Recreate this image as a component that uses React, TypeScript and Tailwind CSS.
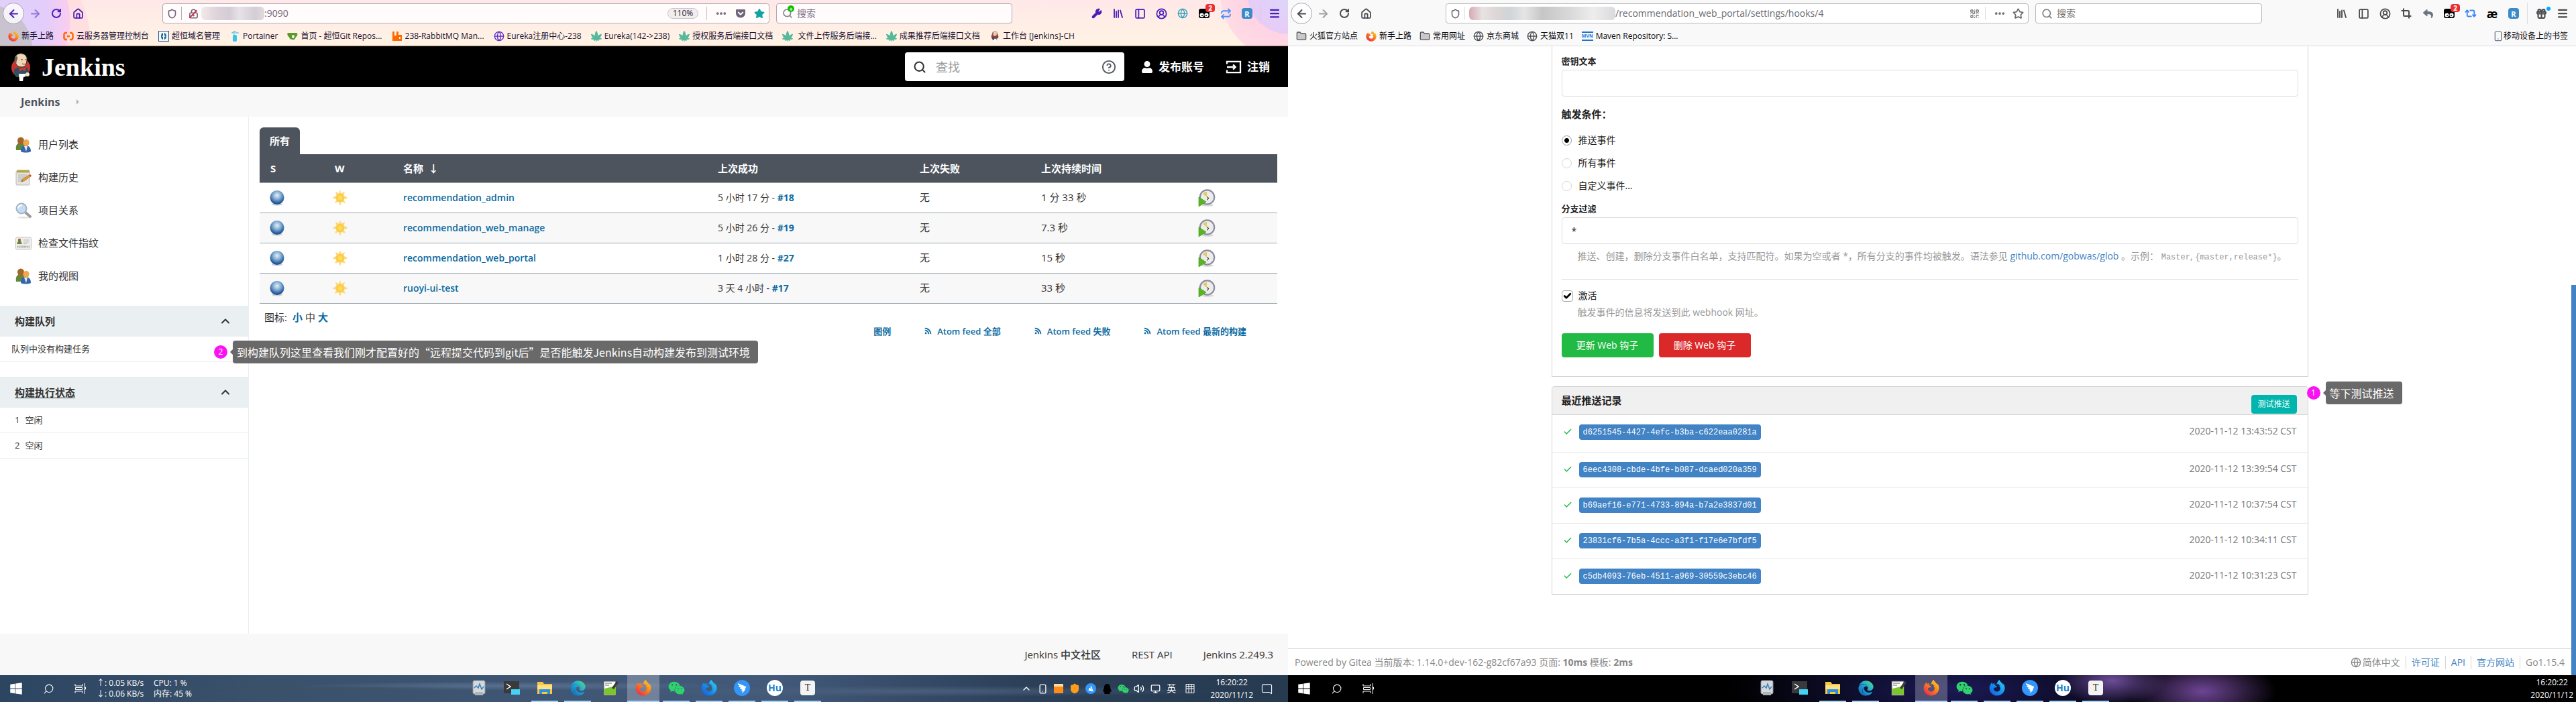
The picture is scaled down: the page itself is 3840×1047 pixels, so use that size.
import React from "react";
import {
  ArrowLeft, ArrowRight, RotateCw, House, Shield, LockKeyhole, Wrench, Library, PanelLeft, CircleUserRound,
  Menu, Star, Ellipsis, Search, Crop, Gift, QrCode, Repeat, Folder, Globe, Smartphone, ChevronUp, Check,
  CircleHelp, Volume2, MessageSquare, Monitor, Repeat2,
} from "lucide-react";
import {
  FaWindows, FaFirefoxBrowser, FaGetPocket, FaCannabis, FaRss, FaEdge, FaWeixin, FaQq, FaReply, FaUser, FaStar, FaTelegramPlane,
} from "react-icons/fa";

const FONT = "font-['Open_Sans','Noto_Sans_CJK_SC',sans-serif]";

/* ---------- small drawings ---------- */

function Defs() {
  return (
    <svg width="0" height="0" className="absolute" aria-hidden="true">
      <defs>
        <linearGradient id="fox" x1="1" y1="0" x2="0.2" y2="1">
          <stop offset="0" stopColor="#ffe13b" />
          <stop offset="0.45" stopColor="#ff8a16" />
          <stop offset="1" stopColor="#f0264d" />
        </linearGradient>
        <linearGradient id="foxBlue" x1="1" y1="0" x2="0" y2="1">
          <stop offset="0" stopColor="#2fe3f5" />
          <stop offset="0.5" stopColor="#1592f0" />
          <stop offset="1" stopColor="#1557d8" />
        </linearGradient>
        <linearGradient id="edge" x1="1" y1="0" x2="0" y2="1">
          <stop offset="0" stopColor="#5be07a" />
          <stop offset="0.45" stopColor="#1ea9d8" />
          <stop offset="1" stopColor="#0f5fb4" />
        </linearGradient>
        <radialGradient id="ball" cx="0.5" cy="0.35" r="0.65">
          <stop offset="0" stopColor="#e6f0f3" />
          <stop offset="0.4" stopColor="#8db4d8" />
          <stop offset="0.8" stopColor="#2d64a6" />
          <stop offset="1" stopColor="#1d4580" />
        </radialGradient>
        <radialGradient id="sun">
          <stop offset="0" stopColor="#ffe676" />
          <stop offset="1" stopColor="#fbc533" />
        </radialGradient>
      </defs>
    </svg>
  );
}

function Butler({ className }: { className: string }) {
  return (
    <svg viewBox="0 0 30 42" className={className} aria-hidden="true">
      <ellipse cx="15" cy="22" rx="14" ry="14" fill="#c9352d" />
      <path d="M6 8C7 2 13 0 17 1c6 1 8 6 7 11-1 6-3 9-8 9C9 21 6 15 6 8z" fill="#f0d6b7" stroke="#33281f" />
      <path d="M6 8c-1 3 0 7 2 9l1-6c2-2 1-4 0-7z" fill="#6b6256" />
      <path d="M15 10h3m3 0h3M17 16c2 1 4 1 5 0" stroke="#4b382a" strokeWidth="1" fill="none" />
      <path d="M5 25c4-4 7-4 10-3l8-1c3 2 4 6 4 9l-5 6H8c-2-3-4-7-3-11z" fill="#335061" />
      <path d="M13 22l4 1 5-2v6l-5-2-4 3z" fill="#d33833" />
      <path d="M12 31h10v4l-3 1-1 6h-5z" fill="#fff" />
      <circle cx="25" cy="32" r="3" fill="#f3dfc7" />
    </svg>
  );
}

function People() {
  return (
    <svg viewBox="0 0 24 24" className="size-6" aria-hidden="true">
      <path d="M1 20c-1-7 1-11 7-11s7 4 7 11z" fill="#63873a" />
      <ellipse cx="8" cy="6" rx="5" ry="5.6" fill="#a5662a" />
      <path d="M8 22c0-6 2-9 7-9s8 3 8 9c-4 2-11 2-15 0z" fill="#3566ac" />
      <path d="M13 14h5l-2 8z" fill="#dfe9f5" />
      <ellipse cx="16" cy="9" rx="4.5" ry="5.3" fill="#efa84b" />
    </svg>
  );
}

function Notepad() {
  return (
    <svg viewBox="0 0 24 24" className="size-6" aria-hidden="true">
      <rect x="1" y="2" width="20" height="21" rx="1.500" fill="#e4e4e2" stroke="#b9b9b5" />
      <rect x="2" y="0.500" width="19" height="4" rx="1" fill="#b5a748" />
      <path d="M4 8h13M4 11h11M4 14h8M4 17h6" stroke="#a8a8a8" />
      <path d="M9 18l1.500-4L20 8l3 2-10 7z" fill="#e09b36" stroke="#8a6327" strokeWidth="0.500" />
      <path d="M20 8l2-1 2 2-1 1.500z" fill="#d8443c" />
      <path d="M9 18l1-2 1 1z" fill="#333" />
    </svg>
  );
}

function Loupe() {
  return (
    <svg viewBox="0 0 24 24" className="size-6" aria-hidden="true">
      <ellipse cx="13" cy="22.500" rx="10" ry="1.500" fill="#e3e3e3" />
      <path d="M14 14l8 7" stroke="#9c9c9c" strokeWidth="4" strokeLinecap="round" />
      <circle cx="9" cy="9" r="7.500" fill="#c3dcf8" stroke="#a9b3c0" strokeWidth="2" />
      <path d="M4 9a5 5 0 0 1 6-5" stroke="#fff" strokeWidth="2" fill="none" />
    </svg>
  );
}

function Card() {
  return (
    <svg viewBox="0 0 24 24" className="size-6" aria-hidden="true">
      <rect x="0.500" y="3" width="23" height="18" rx="1.500" fill="#eeeeec" stroke="#c4c4c0" />
      <circle cx="6" cy="7" r="2.200" fill="#a5662a" />
      <path d="M2.500 13c0-3 1-4.500 3.500-4.500S9.500 10 9.500 13z" fill="#63873a" />
      <path d="M12 7h9M12 10h8M12 12.500h5" stroke="#b8b8b4" />
      <path d="M3 17h18" stroke="#a4a4a0" strokeWidth="3" strokeDasharray="1 0.700" />
    </svg>
  );
}

function Ball() {
  return (
    <svg viewBox="0 0 24 24" className="size-6" role="img" aria-label="成功">
      <ellipse cx="12" cy="21.500" rx="8" ry="2" fill="#c9ced6" />
      <circle cx="12" cy="11.500" r="10.500" fill="url(#ball)" />
    </svg>
  );
}

function Sun() {
  return (
    <svg viewBox="0 0 24 24" className="size-6" role="img" aria-label="晴">
      <path
        d="M12 0l1.800 5.500L19 2.800l-1.500 5.600L23.500 12l-6 2.500L20 20l-5.800-2L12 24l-2.200-6L4 20l2.500-5.500L0.500 12l6-3.600L5 2.800l5.200 2.700z"
        fill="#fdd87a"
      />
      <circle cx="12" cy="12" r="6" fill="url(#sun)" />
    </svg>
  );
}

function BuildClock() {
  return (
    <svg viewBox="0 0 26 26" className="size-[26px]" aria-hidden="true">
      <ellipse cx="14" cy="24" rx="9" ry="1.800" fill="#d8d8d8" />
      <circle cx="13.500" cy="12" r="10.700" fill="#ecece8" stroke="#8c8ba3" strokeWidth="2.200" />
      <path d="M13 12V4a8 8 0 0 0-6 3z" fill="#e2ca64" />
      <path d="M13.500 11.500l2 2-2 3" stroke="#444" strokeWidth="1.300" fill="none" />
      <path d="M1 12l11 7-11 7z" fill="#55b81f" stroke="#3d8d14" strokeWidth="0.600" />
    </svg>
  );
}

function SignOut() {
  return (
    <svg viewBox="0 0 26 22" className="h-5 w-6" fill="none" stroke="currentColor" strokeWidth="2.500" aria-hidden="true">
      <path d="M2 6V2h22v18H2v-4M2 11h14M12 7l4 4-4 4" />
    </svg>
  );
}

function Monkey({ className }: { className: string }) {
  return (
    <svg viewBox="0 0 16 16" className={className} aria-hidden="true">
      <rect x="0" y="1" width="16" height="14" rx="3" fill="#000" />
      <circle cx="4.500" cy="10.500" r="3" fill="#fff" />
      <circle cx="11.500" cy="10.500" r="3" fill="#fff" />
      <circle cx="5" cy="11" r="1" fill="#000" />
      <circle cx="11" cy="11" r="1" fill="#000" />
    </svg>
  );
}

function TaskView() {
  return (
    <svg viewBox="0 0 18 18" className="size-[18px]" fill="none" stroke="#fff" aria-hidden="true">
      <path d="M1 2v3h11V2M1 16v-3h11v3M1.500 7.500h10v3h-10zM15.500 1v16M14.500 7h2v3h-2" />
    </svg>
  );
}

/* ---------- shared browser chrome ---------- */

type Tone = { icon: string };

function ToolButton({ label, children, className = "" }: { label: string; children: React.ReactNode; className?: string }) {
  return (
    <button type="button" aria-label={label} className={`relative flex h-8 w-8 flex-none items-center justify-center ${className}`}>
      {children}
    </button>
  );
}

function NavButtons({ tone }: { tone: Tone }) {
  return (
    <div className={`flex flex-none items-center pl-1 ${tone.icon}`}>
      <ToolButton label="后退" className="rounded-full border border-[#a9a3ad] bg-white/80"><ArrowLeft size={19} strokeWidth={2.5} /></ToolButton>
      <ToolButton label="前进" className="opacity-50"><ArrowRight size={19} strokeWidth={2.5} /></ToolButton>
      <ToolButton label="刷新"><RotateCw size={16} strokeWidth={3} /></ToolButton>
      <ToolButton label="主页"><House size={17} strokeWidth={2.5} /></ToolButton>
    </div>
  );
}

function Tampermonkey() {
  return (
    <ToolButton label="脚本">
      <Monkey className="size-4" />
      <span className="absolute top-0.5 right-0 flex h-3 w-3.5 items-center justify-center rounded-sm bg-[#eb2f2f] text-[10px] leading-none font-bold text-white">2</span>
    </ToolButton>
  );
}

function RBox() {
  return <span className="flex size-4 items-center justify-center rounded-sm bg-[#3b8bc9] text-[11px] leading-none font-bold text-white">R</span>;
}

type Mark = { icon: React.ReactNode; text: string };

function Bookmark({ icon, text }: Mark) {
  return (
    <a href="#" className="flex items-center gap-1 whitespace-pre">
      {icon}
      {text}
    </a>
  );
}

const firefoxIcon = <FaFirefoxBrowser className="size-4 flex-none fill-[url(#fox)]" />;
const leafIcon = <FaCannabis className="size-4 flex-none text-[#55b99b]" />;

const leftMarks: Mark[] = [
  { icon: firefoxIcon, text: "新手上路" },
  {
    icon: (
      <svg viewBox="0 0 16 16" className="size-4" fill="none" stroke="#ff6a00" strokeWidth="2.500" aria-hidden="true">
        <path d="M6 3H3L1.500 5v6L3 13h3M10 3h3l1.500 2v6L13 13h-3M6 8h4" />
      </svg>
    ),
    text: "云服务器管理控制台",
  },
  {
    icon: (
      <svg viewBox="0 0 16 16" className="size-4" aria-hidden="true">
        <rect x="0.500" y="0.500" width="15" height="15" fill="#f2f7fa" stroke="#2a5f92" />
        <path d="M7 3C3 4 3 12 7 13V9L5 8l2-1zM9 3c4 1 4 9 0 10V9l2-1-2-1z" fill="#16608f" />
      </svg>
    ),
    text: "超恒域名管理",
  },
  {
    icon: (
      <svg viewBox="0 0 16 16" className="size-4" aria-hidden="true">
        <path d="M7 0v9M3 3h11M4 3l3-3 5 3" stroke="#4fc3e8" fill="none" />
        <rect x="5" y="6" width="6" height="10" rx="2" fill="#33c3ee" />
      </svg>
    ),
    text: "Portainer",
  },
  {
    icon: (
      <svg viewBox="0 0 16 16" className="size-4" aria-hidden="true">
        <path d="M1 3h13c2 0 2 5-1 6-1 4-3 5-5 4-4 0-5-3-5-4-3-1-3-6-2-6z" fill="#5b9a2b" />
        <path d="M8 6l3 1-1 4-3-1z" fill="#fff" />
      </svg>
    ),
    text: "首页 - 超恒Git Repos...",
  },
  {
    icon: (
      <svg viewBox="0 0 16 16" className="size-4" aria-hidden="true">
        <path d="M1 1h3v6h3V1h3v5h5v9H1z" fill="#ff6a00" />
        <rect x="11" y="9" width="2" height="3" fill="#fff3e8" />
      </svg>
    ),
    text: "238-RabbitMQ Man...",
  },
  { icon: <Globe size={16} className="text-[#5b2fc9]" />, text: "Eureka注册中心-238" },
  { icon: leafIcon, text: "Eureka(142->238)" },
  { icon: leafIcon, text: "授权服务后端接口文档" },
  { icon: leafIcon, text: " 文件上传服务后端接..." },
  { icon: leafIcon, text: "成果推荐后端接口文档" },
  { icon: <Butler className="h-4 w-4" />, text: "工作台 [Jenkins]-CH" },
];

const folderIcon = <Folder size={16} className="fill-[#c9c9cc] text-[#58585c]" />;
const rightMarks: Mark[] = [
  { icon: folderIcon, text: "火狐官方站点" },
  { icon: firefoxIcon, text: "新手上路" },
  { icon: folderIcon, text: "常用网址" },
  { icon: <Globe size={16} className="text-[#4f4f53]" />, text: "京东商城" },
  { icon: <Globe size={16} className="text-[#4f4f53]" />, text: "天猫双11" },
  {
    icon: <span className="border-y-2 border-[#1e74d2] text-[7px] leading-[10px] font-bold text-[#1e74d2]">MVN</span>,
    text: "Maven Repository: S...",
  },
];

function LeftChrome() {
  const tone = { icon: "text-[#4a1fb8]" };
  return (
    <header className="h-[69px] flex-none border-b border-[#b58b80] bg-[radial-gradient(circle_at_-20px_75px,#c9c3cf_0,#c9c3cf_68px,transparent_69px),radial-gradient(circle_at_0px_30px,#e0d2fb_0,#e3cdfa_70px,#fbcdf0_104px,transparent_105px),radial-gradient(circle_at_0px_60px,#ffd9e2_0,#ffdfe0_134px,transparent_135px),radial-gradient(circle_at_100%_-10px,#ddd6fb_0,#e6ccf6_60px,#ffd3e4_61px,#ffdbe4_100px,transparent_101px),linear-gradient(#ffe8e9,#fff3e3)]">
      <div className="flex h-10 items-center">
        <NavButtons tone={tone} />
        <div className="ml-[110px] flex h-[30px] flex-1 items-center rounded-sm border border-[#b3a9b5] bg-[#fffcfb] text-[#6f6379]">
          <Shield size={15} strokeWidth={2.5} className="ml-1.5" />
          <span className="mx-1.5 h-5 w-px bg-[#b3a9b5]" />
          <span className="relative ml-1 flex-none">
            <LockKeyhole size={15} strokeWidth={2.5} />
            <span className="absolute top-0 left-1.5 h-4 w-0.5 rotate-45 bg-[#e22850]" />
          </span>
          <span className="ml-1 h-5 w-[94px] rounded-md bg-[linear-gradient(90deg,#f3e9e8_0,#ddd3d9_25%,#d4ccd6_45%,#e6e2e6_60%,#d3ced6_85%,#dedadf)]" />
          <input aria-label="地址" readOnly value=":9090" className="min-w-0 flex-1 bg-transparent text-sm outline-none" />
          <button type="button" className="h-4 w-[46px] flex-none rounded-full border border-[#c9c4c9] bg-[#f1eeee] text-xs leading-none text-[#2a1a3d]">110%</button>
          <span className="mx-3 h-5 w-px bg-[#c9c0ca]" />
          <Ellipsis size={18} strokeWidth={3} />
          <FaGetPocket size={16} className="ml-3" />
          <FaStar size={16} className="mr-1.5 ml-3 text-[#0fa3a3]" />
        </div>
        <label className="mr-[110px] ml-2.5 flex h-[30px] w-[352px] flex-none items-center rounded-sm border border-[#b3a9b5] bg-[#fffcfb] pl-2 text-[#8c8294]">
          <span className="relative">
            <Search size={16} strokeWidth={2.5} />
            <span className="absolute -top-1 left-2 flex size-2.5 items-center justify-center rounded-full bg-[#12bc00] text-[9px] leading-none font-bold text-white">+</span>
          </span>
          <input aria-label="搜索" placeholder="搜索" className="ml-1.5 min-w-0 flex-1 bg-transparent text-sm outline-none placeholder:text-[#80758a]" />
        </label>
        <div className={`flex flex-none items-center ${tone.icon}`}>
          <ToolButton label="工具"><Wrench size={16} className="fill-current" /></ToolButton>
          <ToolButton label="书库"><Library size={18} strokeWidth={2.5} /></ToolButton>
          <ToolButton label="侧栏"><PanelLeft size={17} strokeWidth={2.5} /></ToolButton>
          <ToolButton label="账户"><CircleUserRound size={17} strokeWidth={2.5} /></ToolButton>
          <ToolButton label="翻译"><Globe size={16} className="text-[#2f9fb8]" /></ToolButton>
          <Tampermonkey />
          <ToolButton label="同步"><Repeat size={17} strokeWidth={2.5} className="text-[#4a90ff]" /></ToolButton>
          <ToolButton label="RESTer"><RBox /></ToolButton>
          <span className="mx-1 h-8 w-px bg-[#e3c6e8]" />
          <ToolButton label="菜单" className="mr-1"><Menu size={18} strokeWidth={3} /></ToolButton>
        </div>
      </div>
      <nav aria-label="书签" className="flex h-7 items-center gap-3.5 pl-3 text-xs text-[#1d1133]">
        {leftMarks.map((m) => <Bookmark key={m.text} {...m} />)}
      </nav>
    </header>
  );
}

function RightChrome() {
  const tone = { icon: "text-[#4a4a4f]" };
  return (
    <header className="h-[69px] flex-none border-b border-[#dcdcdc] bg-[#f9f9fa]">
      <div className="flex h-10 items-center">
        <NavButtons tone={tone} />
        <div className="ml-[103px] flex h-[30px] flex-1 items-center rounded-sm border border-[#b9b9b9] bg-white text-[#6b6b6f]">
          <Shield size={15} strokeWidth={2.5} className="ml-1.5" />
          <span className="mx-1.5 h-5 w-px bg-[#dedede]" />
          <span className="h-5 w-[218px] rounded-md bg-[linear-gradient(90deg,#d6a9b2_0,#e8e2e2_9%,#dcd5d6_20%,#cfd5d8_28%,#e5e5e5_38%,#c6c6c6_50%,#dadada_70%,#ededed_85%,#d9dadc)]" />
          <input aria-label="地址" readOnly value="/recommendation_web_portal/settings/hooks/4" className="min-w-0 flex-1 bg-transparent text-sm outline-none" />
          <QrCode size={15} />
          <span className="mx-2 h-5 w-px bg-[#dedede]" />
          <Ellipsis size={18} strokeWidth={3} className="ml-1" />
          <Star size={17} strokeWidth={2.5} className="mr-1.5 ml-2.5" />
        </div>
        <label className="mr-[103px] ml-2.5 flex h-[30px] w-[338px] flex-none items-center rounded-sm border border-[#b9b9b9] bg-white pl-2 text-[#858589]">
          <Search size={17} strokeWidth={2.5} />
          <input aria-label="搜索" placeholder="搜索" className="ml-1.5 min-w-0 flex-1 bg-transparent text-sm outline-none placeholder:text-[#6f6f73]" />
        </label>
        <div className={`flex flex-none items-center ${tone.icon}`}>
          <ToolButton label="书库"><Library size={18} strokeWidth={2.5} /></ToolButton>
          <ToolButton label="侧栏"><PanelLeft size={17} strokeWidth={2.5} /></ToolButton>
          <ToolButton label="账户"><CircleUserRound size={17} strokeWidth={2.5} /></ToolButton>
          <ToolButton label="截图"><Crop size={16} strokeWidth={3} /></ToolButton>
          <ToolButton label="撤销"><FaReply size={15} className="text-[#6b7683]" /></ToolButton>
          <Tampermonkey />
          <ToolButton label="同步"><Repeat2 size={18} strokeWidth={2.5} className="text-[#3b86f7]" /></ToolButton>
          <ToolButton label="拼写" className="text-lg leading-none font-bold text-black">æ</ToolButton>
          <ToolButton label="RESTer"><RBox /></ToolButton>
          <span className="mx-1 h-8 w-px bg-[#dedede]" />
          <ToolButton label="新功能">
            <Gift size={17} strokeWidth={3} />
            <span className="absolute top-1.5 right-0.5 size-1.5 rounded-full bg-[#00a9ff]" />
          </ToolButton>
          <ToolButton label="菜单" className="mr-1"><Menu size={18} strokeWidth={3} /></ToolButton>
        </div>
      </div>
      <nav aria-label="书签" className="flex h-7 items-center gap-3 pr-3 pl-3 text-xs text-[#0c0c0d]">
        {rightMarks.map((m) => <Bookmark key={m.text} {...m} />)}
        <a href="#" className="ml-auto flex items-center"><Smartphone size={16} className="text-[#6d7886]" />移动设备上的书签</a>
      </nav>
    </header>
  );
}

/* ---------- annotation ---------- */

function Note({ n, text, className }: { n: string; text: string; className: string }) {
  return (
    <div className={`absolute z-10 flex items-center ${className}`}>
      <span className="flex size-5 items-center justify-center rounded-full bg-[#fa12f4] text-xs leading-none text-white">{n}</span>
      <span className="ml-1 border-y-4 border-r-4 border-y-transparent border-r-[#666]" />
      <span className="h-[34px] rounded-sm bg-[#666]/98 pr-3 pl-1.5 font-['Noto_Sans_CJK_SC',sans-serif] text-base leading-[34px] whitespace-nowrap text-white">{text}</span>
    </div>
  );
}

/* ---------- Jenkins ---------- */

const sideItems = [
  { icon: <People />, text: "用户列表" },
  { icon: <Notepad />, text: "构建历史" },
  { icon: <Loupe />, text: "项目关系" },
  { icon: <Card />, text: "检查文件指纹" },
  { icon: <People />, text: "我的视图" },
];

const jobs = [
  { name: "recommendation_admin", ok: "5 小时 17 分 - ", num: "#18", dur: "1 分 33 秒" },
  { name: "recommendation_web_manage", ok: "5 小时 26 分 - ", num: "#19", dur: "7.3 秒" },
  { name: "recommendation_web_portal", ok: "1 小时 28 分 - ", num: "#27", dur: "15 秒" },
  { name: "ruoyi-ui-test", ok: "3 天 4 小时 - ", num: "#17", dur: "33 秒" },
];

function PaneHeader({ title, underline = false }: { title: string; underline?: boolean }) {
  return (
    <h2 className="flex h-[46px] items-center justify-between bg-[#eaeff2] pr-6 pl-[22px] text-[15px] font-bold text-[#333]">
      <span className={underline ? "underline underline-offset-2" : ""}>{title}</span>
      <button type="button" aria-label={`收起${title}`}><ChevronUp size={20} strokeWidth={2.5} /></button>
    </h2>
  );
}

function Jenkins() {
  return (
    <div className="flex min-h-0 flex-1 flex-col bg-white text-[15px] text-[#333]">
      <div className="flex h-[61px] flex-none items-center bg-black pr-[27px] text-white">
        <a href="#" className="flex items-center gap-4 pl-4">
          <Butler className="h-[42px] w-[30px]" />
          <span className="font-['Liberation_Serif',serif] text-[38px] leading-none font-bold">Jenkins</span>
        </a>
        <label className="ml-auto flex h-[43px] w-[327px] items-center rounded bg-white px-3 text-[#4d545d]">
          <Search size={20} strokeWidth={2.5} className="text-[#333]" />
          <input aria-label="查找" placeholder="查找" className="ml-3.5 min-w-0 flex-1 bg-transparent text-lg outline-none placeholder:text-[#9a9a9a]" />
          <CircleHelp size={22} />
        </label>
        <a href="#" className="ml-[25px] flex items-center gap-2 text-[17px] font-bold"><FaUser size={18} />发布账号</a>
        <a href="#" className="ml-8 flex items-center gap-2 text-[17px] font-bold"><SignOut />注销</a>
      </div>
      <nav aria-label="路径" className="flex h-11 flex-none items-center bg-[#f8f8f8] pl-[31px]">
        <a href="#" className="text-base font-bold text-[#4d545d]">Jenkins</a>
        <span className="ml-6 border-y-4 border-l-4 border-y-transparent border-l-[#b5b5b5]" />
      </nav>
      <div className="flex flex-1">
        <aside className="w-[371px] flex-none border-r border-[#eaeff2]">
          <ul className="pt-[17px] pb-5">
            {sideItems.map((s) => (
              <li key={s.text} className="flex h-[49px] items-center">
                <a href="#" className="flex items-center gap-2.5 pl-[23px]">{s.icon}{s.text}</a>
              </li>
            ))}
          </ul>
          <section>
            <PaneHeader title="构建队列" />
            <p className="relative flex h-[38px] items-center border-b border-[#eaeff2] pl-[17px] text-[13px]">
              队列中没有构建任务
              <Note n="2" text="到构建队列这里查看我们刚才配置好的“远程提交代码到git后”是否能触发Jenkins自动构建发布到测试环境" className="top-[6px] left-[319px]" />
            </p>
          </section>
          <section className="mt-[22px]">
            <PaneHeader title="构建执行状态" underline />
            <ul className="text-[13px]">
              {["1", "2"].map((n) => (
                <li key={n} className="flex h-[38px] items-center gap-2 border-b border-[#eaeff2] pl-[22px]"><span>{n}</span>空闲</li>
              ))}
            </ul>
          </section>
        </aside>
        <main className="min-w-0 flex-1 pt-4 pr-4 pl-4">
          <button type="button" className="h-10 rounded-t-md bg-[#4d545d] px-[15px] text-[15px] font-bold text-white">所有</button>
          <table className="w-full table-fixed border-collapse text-left">
            <colgroup>
              <col className="w-24" />
              <col className="w-[102px]" />
              <col />
              <col className="w-[301px]" />
              <col className="w-[181px]" />
              <col className="w-[236px]" />
              <col className="w-[132px]" />
            </colgroup>
            <thead>
              <tr className="h-[42px] border-b border-[#98a6ad] bg-[#4d545d] text-white">
                {["S", "W", "名称  ↓", "上次成功", "上次失败", "上次持续时间", ""].map((h) => (
                  <th key={h} scope="col" className="pl-4 font-bold whitespace-pre">{h}</th>
                ))}
              </tr>
            </thead>
            <tbody>
              {jobs.map((j) => (
                <tr key={j.name} className="h-[45px] border-b border-[#98a6ad] even:bg-[#f8f8f8]">
                  <td className="pl-3.5"><Ball /></td>
                  <td className="pl-3"><Sun /></td>
                  <td className="pl-4"><a href="#" className="text-sm font-semibold text-[#0b6aa2]">{j.name}</a></td>
                  <td className="pl-4 text-sm">{j.ok}<a href="#" className="font-bold text-[#0b6aa2]">{j.num}</a></td>
                  <td className="pl-4">无</td>
                  <td className="pl-4">{j.dur}</td>
                  <td className="pl-3.5"><button type="button" aria-label={`构建 ${j.name}`} className="block"><BuildClock /></button></td>
                </tr>
              ))}
            </tbody>
          </table>
          <p className="flex h-[31px] items-center gap-1 pt-2.5 pl-[7px] leading-5">
            <span className="mr-1">图标:</span>
            <a href="#" className="font-bold text-[#0b6aa2]">小</a>
            <span>中</span>
            <a href="#" className="font-bold text-[#0b6aa2]">大</a>
          </p>
          <div className="flex justify-end gap-[50px] pr-[46px] text-[13px] leading-5 font-semibold text-[#0b6aa2]">
            <a href="#" className="font-bold">图例</a>
            <a href="#" className="flex items-center gap-2"><FaRss size={11} />Atom feed 全部</a>
            <a href="#" className="flex items-center gap-2"><FaRss size={11} />Atom feed 失败</a>
            <a href="#" className="flex items-center gap-2"><FaRss size={11} />Atom feed 最新的构建</a>
          </div>
        </main>
      </div>
      <footer className="flex h-[62px] flex-none items-center justify-end gap-[46px] bg-[#f8f8f8] pr-[22px] text-[15px] font-medium">
        <a href="#">Jenkins 中文社区</a>
        <a href="#">REST API</a>
        <a href="#">Jenkins 2.249.3</a>
      </footer>
    </div>
  );
}

/* ---------- Gitea ---------- */

const deliveries = [
  { id: "d6251545-4427-4efc-b3ba-c622eaa0281a", time: "2020-11-12 13:43:52 CST" },
  { id: "6eec4308-cbde-4bfe-b087-dcaed020a359", time: "2020-11-12 13:39:54 CST" },
  { id: "b69aef16-e771-4733-894a-b7a2e3837d01", time: "2020-11-12 10:37:54 CST" },
  { id: "23831cf6-7b5a-4ccc-a3f1-f17e6e7bfdf5", time: "2020-11-12 10:34:11 CST" },
  { id: "c5db4093-76eb-4511-a969-30559c3ebc46", time: "2020-11-12 10:31:23 CST" },
];

function Gitea() {
  return (
    <div className="flex min-h-0 flex-1 bg-white text-sm text-[#212121]">
      <div className="flex min-w-0 flex-1 flex-col">
        <main className="mx-auto w-full max-w-[1128px] flex-1">
          <form className="border border-t-0 border-[#d4d4d5] px-3.5 pt-3 pb-7" onSubmit={(e) => e.preventDefault()}>
            <label htmlFor="secret" className="block text-[13px] leading-5 font-bold">密钥文本</label>
            <input id="secret" className="mt-[3px] block h-10 w-full rounded border border-[#dededf] px-3.5 outline-none" />
            <fieldset>
              <legend className="pt-3.5 text-[15px] leading-6 font-bold">触发条件：</legend>
              <div className="pt-2.5">
                {["推送事件", "所有事件", "自定义事件..."].map((t, i) => (
                  <label key={t} className="flex h-[34px] items-center gap-2.5">
                    <input
                      type="radio"
                      name="events"
                      defaultChecked={i === 0}
                      className="size-[15px] appearance-none rounded-full border border-[#d4d4d5] checked:border-[#999] checked:bg-[radial-gradient(circle,#000_0,#000_3px,transparent_4px)]"
                    />
                    {t}
                  </label>
                ))}
              </div>
            </fieldset>
            <label htmlFor="branch" className="mt-[7px] block text-[13px] leading-5 font-bold">分支过滤</label>
            <input id="branch" defaultValue="*" className="mt-[3px] block h-10 w-full rounded border border-[#dededf] px-3.5 outline-none" />
            <p className="mt-2 pl-6 leading-5 text-[#999]">
              推送、创建，删除分支事件白名单，支持匹配符。如果为空或者 *，所有分支的事件均被触发。语法参见{" "}
              <a href="#" className="text-[#4183c4]">github.com/gobwas/glob</a> 。示例：{" "}
              <code className="font-['Liberation_Mono',monospace] text-xs">Master</code>,{" "}
              <code className="font-['Liberation_Mono',monospace] text-xs">{"{master,release*}"}</code>。
            </p>
            <hr className="mt-6 border-[#dededf]" />
            <label className="mt-3.5 flex h-5 items-center gap-2">
              <span className="relative flex size-[17px]">
                <input type="checkbox" defaultChecked className="size-[17px] appearance-none rounded-sm border border-[#a9a9aa]" />
                <Check size={13} strokeWidth={5} className="absolute top-0.5 left-0.5 text-black" />
              </span>
              激活
            </label>
            <p className="mt-[5px] pl-6 leading-5 text-[#999]">触发事件的信息将发送到此 webhook 网址。</p>
            <div className="mt-[21px] flex gap-2">
              <button type="submit" className="h-9 w-[137px] rounded bg-[#21ba45] text-white">更新 Web 钩子</button>
              <button type="button" className="h-9 w-[137px] rounded bg-[#db2828] text-white">删除 Web 钩子</button>
            </div>
          </form>
          <section className="relative mt-3.5 rounded-t border border-[#d4d4d5]">
            <h2 className="flex h-[42px] items-center justify-between rounded-t border-b border-[#d4d4d5] bg-[#f0f0f0] pr-4 pl-3.5 text-[15px] font-bold">
              最近推送记录
              <button type="button" className="mt-2.5 h-7 w-[68px] rounded bg-[#00b5ad] text-xs font-normal text-white">测试推送</button>
            </h2>
            <ul>
              {deliveries.map((d) => (
                <li key={d.id} className="flex h-[53px] items-start border-b border-[#e8e8e9] pt-3.5 pr-4 pl-4 first:h-14 last:h-[52px] last:border-b-0">
                  <Check size={14} strokeWidth={2.5} className="mt-1 text-[#21ba45]" />
                  <a href="#" className="ml-2.5 h-[23px] rounded bg-[#4183c4] px-1.5 font-['Liberation_Mono',monospace] text-xs leading-[25px] text-white">{d.id}</a>
                  <time className="ml-auto leading-5 text-[#767676]">{d.time}</time>
                </li>
              ))}
            </ul>
            <Note n="1" text="等下测试推送" className="-top-2 left-[1125px]" />
          </section>
        </main>
        <footer className="flex h-10 flex-none items-center justify-between border-t border-[#d9d9d9] px-2.5 text-[#888]">
          <p>Powered by Gitea 当前版本: 1.14.0+dev-162-g82cf67a93 页面: <strong>10ms</strong> 模板: <strong>2ms</strong></p>
          <nav aria-label="页脚" className="flex items-center leading-5">
            <button type="button" className="flex items-center gap-0.5 pr-2"><Globe size={16} />简体中文</button>
            <a href="#" className="border-l border-[#d4d4d5] px-2 text-[#4183c4]">许可证</a>
            <a href="#" className="border-l border-[#d4d4d5] px-2 text-[#4183c4]">API</a>
            <a href="#" className="border-l border-[#d4d4d5] px-2 text-[#4183c4]">官方网站</a>
            <span className="border-l border-[#d4d4d5] pl-2">Go1.15.4</span>
          </nav>
        </footer>
      </div>
      <div className="flex w-[7px] flex-none flex-col justify-end">
        <div className="h-[62%] bg-[#4183c4]" />
      </div>
    </div>
  );
}

/* ---------- taskbars ---------- */

const apps = [
  {
    name: "监视器",
    on: false,
    icon: (
      <svg viewBox="0 0 24 24" className="size-6" aria-hidden="true">
        <rect x="3" y="1" width="18" height="20" rx="2" fill="#d4d9dd" stroke="#8a9299" />
        <path d="M5 12l3-3 3 3 2-6 3 8 3-4" stroke="#3d7fb5" fill="none" strokeWidth="1.500" />
        <path d="M6 18h12v5H6z" fill="#aeb4b8" />
      </svg>
    ),
  },
  {
    name: "终端",
    on: false,
    icon: (
      <svg viewBox="0 0 24 24" className="size-6" aria-hidden="true">
        <rect x="0" y="2" width="23" height="18" fill="#3a3a3c" />
        <path d="M4 6l6 4-6 4" stroke="#fff" strokeWidth="1.500" fill="none" />
        <rect x="11" y="14" width="13" height="8" fill="#45d2f5" />
      </svg>
    ),
  },
  {
    name: "文件",
    on: true,
    icon: (
      <svg viewBox="0 0 24 24" className="size-6" aria-hidden="true">
        <path d="M1 3h8l2 3h12v15H1z" fill="#f9c938" />
        <path d="M1 8h22v6H1z" fill="#fde08a" />
        <path d="M4 14h16v7h-4v-3H8v3H4z" fill="#2f8fdd" />
      </svg>
    ),
  },
  { name: "Edge", on: true, icon: <FaEdge size={23} className="fill-[url(#edge)]" /> },
  {
    name: "记事本",
    on: false,
    icon: (
      <svg viewBox="0 0 24 24" className="size-6" aria-hidden="true">
        <rect x="2" y="2" width="18" height="21" fill="#fff" stroke="#555" />
        <path d="M3 13l17-4v13H3z" fill="#7cc62d" />
        <path d="M4 5h10M4 8h6" stroke="#666" />
        <path d="M14 12L21 2l3 2-7 10z" fill="#3b3b3b" />
      </svg>
    ),
  },
  { name: "Firefox", on: true, active: true, icon: <FaFirefoxBrowser size={24} className="fill-[url(#fox)]" /> },
  { name: "微信", on: true, icon: <FaWeixin size={25} className="text-[#2fd36c]" /> },
  { name: "Firefox 开发版", on: true, icon: <FaFirefoxBrowser size={24} className="fill-[url(#foxBlue)]" /> },
  {
    name: "钉钉",
    on: true,
    icon: (
      <svg viewBox="0 0 24 24" className="size-6" aria-hidden="true">
        <circle cx="12" cy="12" r="12" fill="#3296fa" />
        <path d="M6 5l12 5c0 2-1 3-2 4l1 1-5 5 1-4h-2l1-2c-2 0-3-1-3-2l2 0c-3-1-4-2-4-3l2 0c-2-1-3-2-3-4z" fill="#fff" />
      </svg>
    ),
  },
  {
    name: "HBuilder",
    on: true,
    icon: <span className="flex size-6 items-center justify-center rounded-full bg-white text-sm leading-none font-bold text-[#1b7fc4]">Hu</span>,
  },
  {
    name: "Typora",
    on: true,
    icon: <span className="flex size-[22px] items-center justify-center rounded-sm bg-[#f3f3f3] font-['Liberation_Serif',serif] text-sm leading-none text-[#333]">T</span>,
  },
];

function Taskbar({ className, stats, tray }: { className: string; stats?: React.ReactNode; tray: React.ReactNode }) {
  return (
    <footer className={`flex h-10 flex-none items-center text-white ${className}`}>
      <div className="flex w-[690px] flex-none items-center">
        <button type="button" aria-label="开始" className="flex w-12 justify-center"><FaWindows size={20} /></button>
        <button type="button" aria-label="搜索" className="flex w-12 justify-center"><Search size={17} strokeWidth={1.5} className="-scale-x-100" /></button>
        <button type="button" aria-label="任务视图" className="flex w-12 justify-center"><TaskView /></button>
        {stats}
      </div>
      <div className="flex h-10 gap-px">
        {apps.map((a) => (
          <button key={a.name} type="button" aria-label={a.name} className={`flex w-12 flex-col items-center ${a.active ? "bg-white/25" : ""}`}>
            <span className="flex flex-1 items-center">{a.icon}</span>
            <span className={`h-0.5 ${a.active ? "w-12" : "w-10"} ${a.on ? "bg-[#a8d4f7]" : ""}`} />
          </button>
        ))}
      </div>
      <div className="ml-auto flex items-center">{tray}</div>
    </footer>
  );
}

function Clock() {
  return (
    <p className="text-center text-xs leading-[19px]">
      16:20:22
      <br />
      2020/11/12
    </p>
  );
}

function ImeIcon() {
  return (
    <svg viewBox="0 0 16 16" className="size-4" fill="none" stroke="#fff" aria-hidden="true">
      <path d="M2 1.500h12v13H2zM2 8h12M6 1v14M10 1v14M2 4.500h12" />
    </svg>
  );
}

export default function App() {
  return (
    <div lang="zh-CN" className={`grid min-h-screen grid-cols-2 overflow-hidden ${FONT}`}>
      <Defs />
      <div className="flex min-h-screen min-w-0 flex-col">
        <LeftChrome />
        <Jenkins />
        <Taskbar
          className="bg-[radial-gradient(ellipse_at_25%_50%,#3f5162_0,transparent_12%),radial-gradient(ellipse_at_70%_60%,#4a5f7c_0,transparent_25%),radial-gradient(ellipse_at_40%_40%,#5a7090_0,transparent_20%),linear-gradient(90deg,#2c4560,#3a516c_20%,#42597a_60%,#2b3f58_80%,#263a50)]"
          stats={
            <div className="grid grid-cols-[85px_70px] text-xs leading-4">
              <span>↑: 0.05 KB/s</span>
              <span>CPU: 1 %</span>
              <span>↓: 0.06 KB/s</span>
              <span>内存: 45 %</span>
            </div>
          }
          tray={
            <>
              {[
                { k: "更多", i: <ChevronUp size={16} /> },
                { k: "设备", i: <Smartphone size={15} /> },
                { k: "工具箱", i: <span className="h-3.5 w-3.5 border-t-4 border-[#ffd9a0] bg-[#ff8c1a]" /> },
                { k: "防护", i: <Shield size={16} className="fill-[#ff9c1b] text-[#ff9c1b]" /> },
                { k: "消息", i: <span className="flex size-4 items-center justify-center rounded-full bg-[#3296fa]"><FaTelegramPlane size={10} className="rotate-90" /></span> },
                { k: "QQ", i: <FaQq size={15} className="text-black" /> },
                { k: "微信", i: <FaWeixin size={17} className="text-[#2fd36c]" /> },
                { k: "音量", i: <Volume2 size={16} /> },
                { k: "网络", i: <Monitor size={15} /> },
              ].map((t) => (
                <button key={t.k} type="button" aria-label={t.k} className="flex w-6 justify-center">{t.i}</button>
              ))}
              <button type="button" className="w-6 text-sm">英</button>
              <button type="button" aria-label="输入法" className="flex w-8 justify-center"><ImeIcon /></button>
              <div className="mr-2 ml-3.5"><Clock /></div>
              <button type="button" aria-label="通知" className="mr-5 flex w-6 justify-center"><MessageSquare size={17} strokeWidth={1.5} className="-scale-x-100" /></button>
            </>
          }
        />
      </div>
      <div className="flex min-h-screen min-w-0 flex-col">
        <RightChrome />
        <Gitea />
        <Taskbar
          className="bg-black bg-[radial-gradient(ellipse_80px_36px_at_64%_20%,#6d4c97_0,transparent_100%),radial-gradient(ellipse_110px_50px_at_71%_60%,#6d4594_0,transparent_100%),radial-gradient(ellipse_340px_90px_at_52%_50%,#1b1a55_0,transparent_100%)]"
          tray={<div className="pr-1"><Clock /></div>}
        />
      </div>
    </div>
  );
}
